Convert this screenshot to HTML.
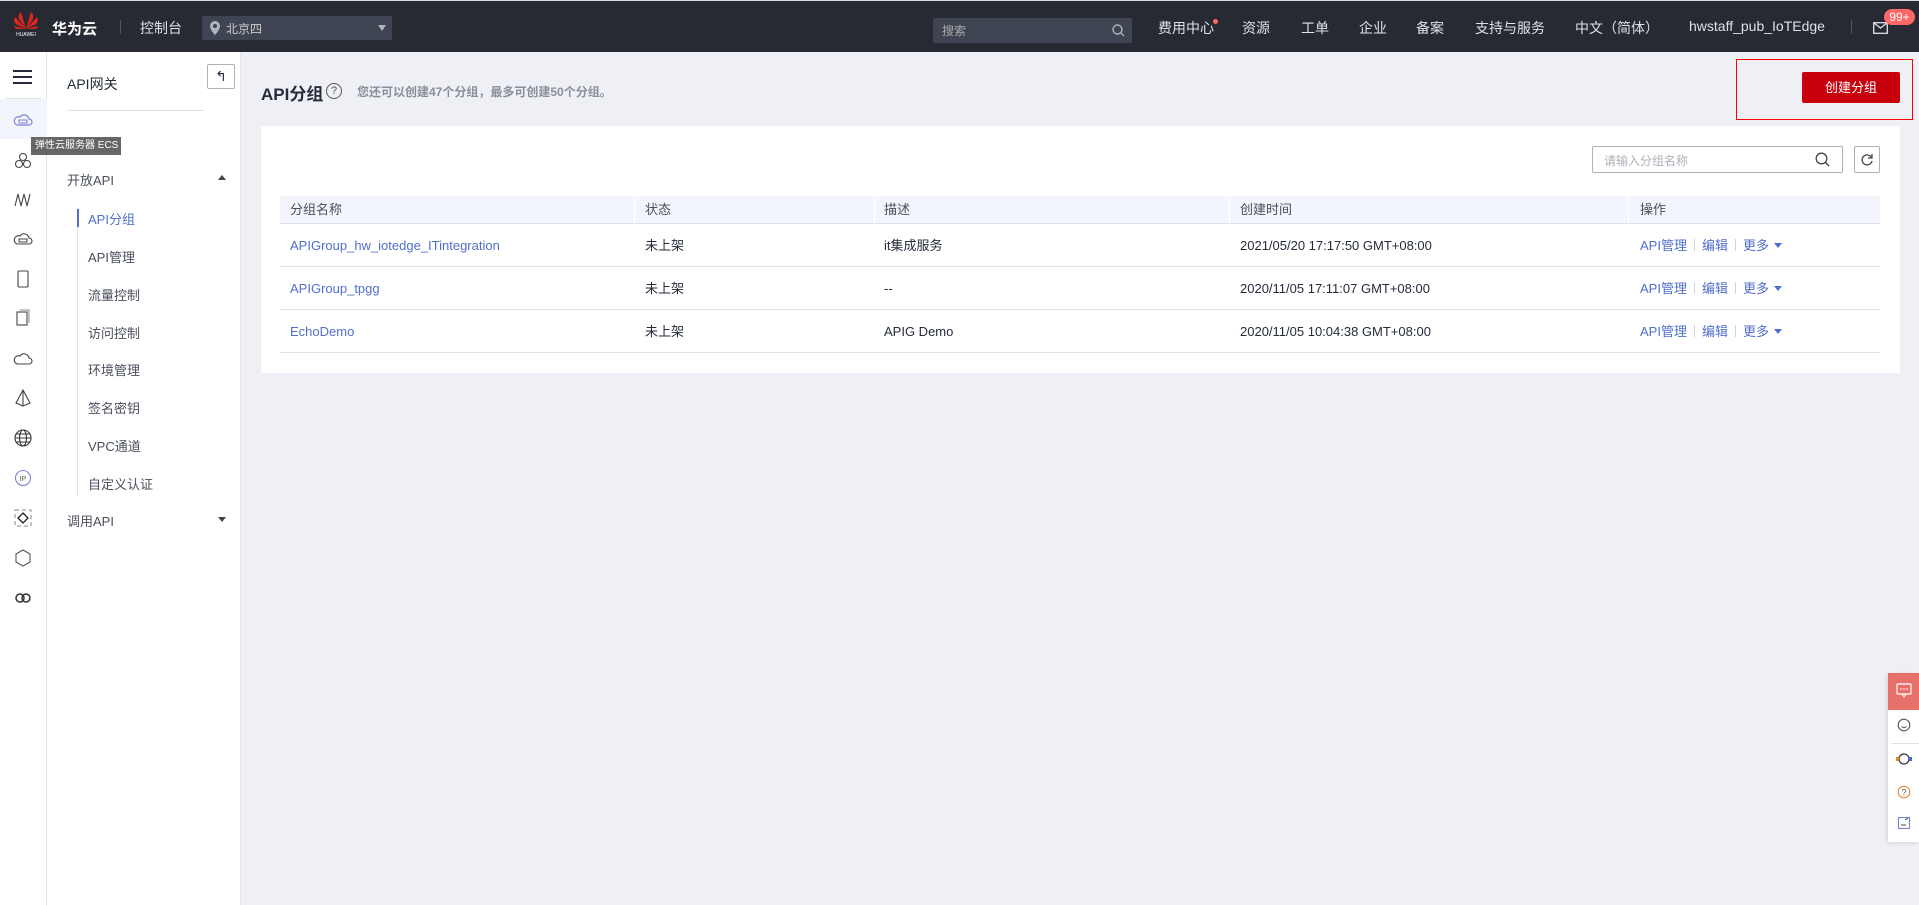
<!DOCTYPE html>
<html><head><meta charset="utf-8"><style>
*{margin:0;padding:0;box-sizing:border-box}
body{width:1919px;height:905px;overflow:hidden;background:#eef0f5;font-family:"Liberation Sans","Noto Sans CJK SC",sans-serif;font-size:13px;color:#252b3a;position:relative}
.abs{position:absolute}
#hdr{left:0;top:0;width:1919px;height:52px;background:#272a33;border-top:1px solid #d8dbe0}
#hdr .t{position:absolute;top:17px;color:#dfe1e6;font-size:14px;white-space:nowrap}
#ib{left:0;top:52px;width:47px;height:853px;background:#fff;border-right:1px solid #e3e5ea}
#sb{left:47px;top:52px;width:194px;height:853px;background:#fff;border-right:1px solid #e3e5ea}
.mi{position:absolute;left:41px;font-size:13px;color:#4a4f5c}
.ico{position:absolute;left:13px;width:20px;height:20px}
#card{left:261px;top:126px;width:1639px;height:247px;background:#fff}
.th{position:absolute;top:196px;height:28px;line-height:28px;background:#f2f5fc;font-size:13px;color:#4a4f5c;border-bottom:1px solid #dfe1e6}
.row{position:absolute;left:280px;width:1600px;height:43px;border-bottom:1px solid #dfe1e6}
.c{position:absolute;top:1px;line-height:42px;font-size:13px;white-space:nowrap}
a{color:#526ecc;text-decoration:none}
.op{color:#526ecc}
.sep{display:inline-block;width:1px;height:12px;background:#d0d3da;margin:0 7px;vertical-align:-1px}
.tri{display:inline-block;width:0;height:0;border-left:4px solid transparent;border-right:4px solid transparent;border-top:5px solid #526ecc;margin-left:5px;vertical-align:2px}
</style></head><body>
<div id="hdr" class="abs">
 <svg class="abs" style="left:12px;top:8px" width="28" height="28" viewBox="0 0 28 28">
  <g fill="#e0241b"><path d="M14 20 L9 3 Q6 5 7 10Z"/><path d="M14 20 L19 3 Q22 5 21 10Z"/><path d="M14 20 L3 8 Q1 12 4 15Z"/><path d="M14 20 L25 8 Q27 12 24 15Z"/><path d="M14 20 L2 17 Q3 20 6 20Z"/><path d="M14 20 L26 17 Q25 20 22 20Z"/></g>
  <text x="14" y="27" font-size="5" fill="#fff" text-anchor="middle" font-family="Liberation Sans">HUAWEI</text></svg>
 <div class="t" style="left:52px;font-weight:bold;color:#fff;font-size:15px">华为云</div>
 <div class="abs" style="left:120px;top:19px;width:1px;height:14px;background:#555"></div>
 <div class="t" style="left:140px">控制台</div>
 <div class="abs" style="left:202px;top:15px;width:190px;height:24px;background:#3f4452;border-radius:2px"></div>
 <svg class="abs" style="left:210px;top:20px" width="10" height="14" viewBox="0 0 10 14"><path d="M5 0a5 5 0 0 0-5 5c0 4 5 9 5 9s5-5 5-9a5 5 0 0 0-5-5z" fill="#aeb3bf"/><circle cx="5" cy="5" r="2" fill="#3f4452"/></svg>
 <div class="t" style="left:226px;top:19px;font-size:12px;color:#ccc">北京四</div>
 <div class="abs" style="left:378px;top:24px;border-left:4px solid transparent;border-right:4px solid transparent;border-top:6px solid #aeb3bf"></div>
 <div class="abs" style="left:933px;top:17px;width:199px;height:25px;background:#3f4452;border-radius:2px"></div>
 <div class="t" style="left:942px;top:21px;font-size:12px;color:#aaa">搜索</div>
 <svg class="abs" style="left:1112px;top:23px" width="13" height="13" viewBox="0 0 13 13"><circle cx="5.5" cy="5.5" r="4.5" fill="none" stroke="#aeb3bf" stroke-width="1.4"/><path d="M9 9l3 3" stroke="#aeb3bf" stroke-width="1.4"/></svg>
 <div class="t" style="left:1158px">费用中心</div><div class="abs" style="left:1213px;top:18px;width:5px;height:5px;border-radius:50%;background:#f66"></div>
 <div class="t" style="left:1242px">资源</div>
 <div class="t" style="left:1301px">工单</div>
 <div class="t" style="left:1359px">企业</div>
 <div class="t" style="left:1416px">备案</div>
 <div class="t" style="left:1475px">支持与服务</div>
 <div class="t" style="left:1575px">中文（简体）</div>
 <div class="t" style="left:1689px">hwstaff_pub_IoTEdge</div>
 <div class="abs" style="left:1851px;top:19px;width:1px;height:14px;background:#555"></div>
 <svg class="abs" style="left:1873px;top:21px" width="15" height="12" viewBox="0 0 15 12"><rect x=".7" y=".7" width="13.6" height="10.6" fill="none" stroke="#dfe1e6" stroke-width="1.3"/><path d="M1 1l6.5 5 6.5-5" fill="none" stroke="#dfe1e6" stroke-width="1.3"/></svg>
 <div class="abs" style="left:1884px;top:8px;width:31px;height:16px;border-radius:8px;background:#f66;color:#fff;font-size:12px;line-height:16px;text-align:center">99+</div>
</div>

<div id="ib" class="abs">
 <div class="abs" style="left:13px;top:18px;width:19px;height:2px;background:#252b3a;box-shadow:0 6px 0 #252b3a,0 12px 0 #252b3a"></div>
 <div class="abs" style="left:6px;top:46px;width:35px;height:1px;background:#dfe1e6"></div>
 <div class="abs" style="left:0;top:47px;width:47px;height:40px;background:#f2f5fc"></div>
 <svg class="ico" style="top:58px" viewBox="0 0 20 20"><path d="M4 15h12a3 3 0 0 0 0-6 5 5 0 0 0-9-2 4 4 0 0 0-3 8z" fill="none" stroke="#7a85d6" stroke-width="1.2"/><rect x="6" y="10" width="8" height="3" fill="none" stroke="#7a85d6"/></svg>
 <svg class="ico" style="top:99px" viewBox="0 0 20 20"><g fill="none" stroke="#444" stroke-width="1.1"><circle cx="10" cy="6" r="3.5"/><circle cx="6" cy="13" r="3.5"/><circle cx="14" cy="13" r="3.5"/></g></svg>
 <svg class="ico" style="top:138px" viewBox="0 0 20 20"><path d="M2 16 5 4 8 16 11 4 14 16 17 4" fill="none" stroke="#444" stroke-width="1.1"/></svg>
 <svg class="ico" style="top:177px" viewBox="0 0 20 20"><path d="M4 15h12a3 3 0 0 0 0-6 5 5 0 0 0-9-2 4 4 0 0 0-3 8z" fill="none" stroke="#444" stroke-width="1.1"/><rect x="6" y="10" width="8" height="3" fill="none" stroke="#444"/></svg>
 <svg class="ico" style="top:217px" viewBox="0 0 20 20"><rect x="5" y="2" width="10" height="16" rx="1" fill="none" stroke="#444" stroke-width="1.1"/></svg>
 <svg class="ico" style="top:256px" viewBox="0 0 20 20"><rect x="4" y="4" width="10" height="13" fill="none" stroke="#444" stroke-width="1.1"/><path d="M7 2h9v13" fill="none" stroke="#888"/></svg>
 <svg class="ico" style="top:297px" viewBox="0 0 20 20"><path d="M4 15h12a3 3 0 0 0 0-6 5 5 0 0 0-9-2 4 4 0 0 0-3 8z" fill="none" stroke="#444" stroke-width="1.1"/></svg>
 <svg class="ico" style="top:336px" viewBox="0 0 20 20"><path d="M10 2 3 15l7 3 7-3z M10 2v16" fill="none" stroke="#444" stroke-width="1.1"/></svg>
 <svg class="ico" style="top:376px" viewBox="0 0 20 20"><g fill="none" stroke="#333" stroke-width="1.1"><circle cx="10" cy="10" r="8"/><ellipse cx="10" cy="10" rx="3.5" ry="8"/><path d="M2 10h16M3.5 6h13M3.5 14h13"/></g></svg>
 <svg class="ico" style="top:416px" viewBox="0 0 20 20"><circle cx="10" cy="10" r="7.5" fill="none" stroke="#7a85d6" stroke-width="1.1"/><text x="10" y="13" font-size="7" text-anchor="middle" fill="#555">IP</text></svg>
 <svg class="ico" style="top:456px" viewBox="0 0 20 20"><rect x="2" y="2" width="16" height="16" fill="none" stroke="#888" stroke-dasharray="4 3"/><path d="M10 5l5 5-5 5-5-5z" fill="none" stroke="#222" stroke-width="1.3"/></svg>
 <svg class="ico" style="top:496px" viewBox="0 0 20 20"><path d="M10 2l7 4v8l-7 4-7-4V6z" fill="none" stroke="#555" stroke-width="1.1"/></svg>
 <svg class="ico" style="top:536px" viewBox="0 0 20 20"><g fill="none" stroke="#333" stroke-width="1.5"><circle cx="7" cy="10" r="4"/><circle cx="13" cy="10" r="4"/></g></svg>
</div>
<div class="abs" style="left:31px;top:137px;width:90px;height:18px;background:#666;color:#fff;font-size:10px;line-height:18px;padding-left:4px;z-index:3">弹性云服务器 ECS</div>

<div id="sb" class="abs">
 <div class="abs" style="left:20px;top:22px;font-size:14px">API网关</div>
 <div class="abs" style="left:160px;top:12px;width:28px;height:25px;border:1px solid #adb0b8;border-radius:2px;background:#fff;font-size:14px;line-height:22px;text-align:center">↰</div>
 <div class="abs" style="left:20px;top:58px;width:137px;height:1px;background:#dfe1e6"></div>
 <div class="abs" style="left:20px;top:118px;color:#4a4f5c">开放API</div>
 <div class="abs" style="left:171px;top:123px;border-left:4px solid transparent;border-right:4px solid transparent;border-bottom:5px solid #444"></div>
 <div class="abs" style="left:30px;top:155px;width:1px;height:290px;background:#dfe1e6"></div>
 <div class="abs" style="left:30px;top:157px;width:2px;height:18px;background:#526ecc"></div>
 <div class="mi" style="top:157px;color:#526ecc">API分组</div>
 <div class="mi" style="top:195px">API管理</div>
 <div class="mi" style="top:233px">流量控制</div>
 <div class="mi" style="top:271px">访问控制</div>
 <div class="mi" style="top:308px">环境管理</div>
 <div class="mi" style="top:346px">签名密钥</div>
 <div class="mi" style="top:384px">VPC通道</div>
 <div class="mi" style="top:422px">自定义认证</div>
 <div class="abs" style="left:20px;top:459px;color:#4a4f5c">调用API</div>
 <div class="abs" style="left:171px;top:465px;border-left:4px solid transparent;border-right:4px solid transparent;border-top:5px solid #444"></div>
</div>

<div class="abs" style="left:261px;top:80px;font-size:17px;font-weight:bold;color:#252b3a">API分组</div>
<div class="abs" style="left:326px;top:83px;width:16px;height:16px;border:1.3px solid #555;border-radius:50%;font-size:11px;line-height:14px;text-align:center;color:#555">?</div>
<div class="abs" style="left:357px;top:83px;font-size:12px;color:#8a8e99;font-weight:bold">您还可以创建47个分组，最多可创建50个分组。</div>
<div class="abs" style="left:1736px;top:59px;width:177px;height:61px;border:1px solid #f00"></div>
<div class="abs" style="left:1802px;top:72px;width:98px;height:31px;background:#c7000b;border-radius:2px;color:#fff;font-size:13px;line-height:31px;text-align:center">创建分组</div>

<div id="card" class="abs"></div>
<div class="abs" style="left:1592px;top:146px;width:251px;height:27px;border:1px solid #adb0b8;border-radius:2px;background:#fff"></div>
<div class="abs" style="left:1604px;top:152px;font-size:12px;color:#adb0b8">请输入分组名称</div>
<svg class="abs" style="left:1815px;top:152px" width="15" height="15" viewBox="0 0 15 15"><circle cx="6.5" cy="6.5" r="5.3" fill="none" stroke="#444" stroke-width="1.3"/><path d="M10.5 10.5l3.5 3.5" stroke="#444" stroke-width="1.3"/></svg>
<div class="abs" style="left:1854px;top:146px;width:26px;height:27px;border:1px solid #adb0b8;border-radius:2px;background:#fff"></div>
<svg class="abs" style="left:1860px;top:153px" width="14" height="14" viewBox="0 0 14 14"><path d="M11.5 4.5A5 5 0 1 0 12 8" fill="none" stroke="#444" stroke-width="1.3"/><path d="M12 1v4H8" fill="none" stroke="#444" stroke-width="1.3"/></svg>

<div class="th" style="left:280px;width:354px;padding-left:10px">分组名称</div>
<div class="th" style="left:635px;width:239px;padding-left:10px">状态</div>
<div class="th" style="left:875px;width:354px;padding-left:9px">描述</div>
<div class="th" style="left:1230px;width:398px;padding-left:10px">创建时间</div>
<div class="th" style="left:1629px;width:251px;padding-left:11px">操作</div>

<div class="row" style="top:224px">
 <div class="c" style="left:10px"><a>APIGroup_hw_iotedge_ITintegration</a></div>
 <div class="c" style="left:365px">未上架</div><div class="c" style="left:604px">it集成服务</div>
 <div class="c" style="left:960px">2021/05/20 17:17:50 GMT+08:00</div>
 <div class="c op" style="left:1360px">API管理<span class="sep"></span>编辑<span class="sep"></span>更多<span class="tri"></span></div>
</div>
<div class="row" style="top:267px">
 <div class="c" style="left:10px"><a>APIGroup_tpgg</a></div>
 <div class="c" style="left:365px">未上架</div><div class="c" style="left:604px">--</div>
 <div class="c" style="left:960px">2020/11/05 17:11:07 GMT+08:00</div>
 <div class="c op" style="left:1360px">API管理<span class="sep"></span>编辑<span class="sep"></span>更多<span class="tri"></span></div>
</div>
<div class="row" style="top:310px">
 <div class="c" style="left:10px"><a>EchoDemo</a></div>
 <div class="c" style="left:365px">未上架</div><div class="c" style="left:604px">APIG Demo</div>
 <div class="c" style="left:960px">2020/11/05 10:04:38 GMT+08:00</div>
 <div class="c op" style="left:1360px">API管理<span class="sep"></span>编辑<span class="sep"></span>更多<span class="tri"></span></div>
</div>

<div class="abs" style="left:1888px;top:673px;width:31px;height:169px;background:#fff;box-shadow:-1px 1px 4px rgba(0,0,0,.12)"></div>
<div class="abs" style="left:1888px;top:673px;width:31px;height:37px;background:#e8706a"></div>
<svg class="abs" style="left:1896px;top:682px" width="16" height="16" viewBox="0 0 16 16"><rect x="1" y="2" width="14" height="10" rx="1" fill="none" stroke="#fff" stroke-width="1.2"/><path d="M6 12l2 3 2-3" fill="none" stroke="#fff"/><circle cx="5" cy="7" r=".8" fill="#fff"/><circle cx="8" cy="7" r=".8" fill="#fff"/><circle cx="11" cy="7" r=".8" fill="#fff"/></svg>
<svg class="abs" style="left:1897px;top:718px" width="14" height="14" viewBox="0 0 14 14"><circle cx="7" cy="7" r="5.8" fill="none" stroke="#555" stroke-width="1.1"/><path d="M4.5 8.5q2.5 2 5 0" fill="none" stroke="#555"/></svg>
<div class="abs" style="left:1891px;top:743px;width:28px;height:1px;background:#dfe1e6"></div>
<svg class="abs" style="left:1895px;top:752px" width="18" height="14" viewBox="0 0 18 14"><circle cx="9" cy="7" r="5" fill="none" stroke="#333" stroke-width="1.2"/><rect x="1" y="5" width="3" height="4" fill="#e58a1f"/><rect x="14" y="5" width="3" height="4" fill="#3b6fd6"/></svg>
<svg class="abs" style="left:1897px;top:785px" width="14" height="14" viewBox="0 0 14 14"><circle cx="7" cy="7" r="5.8" fill="none" stroke="#e58a1f" stroke-width="1.1"/><text x="7" y="10.5" font-size="9" text-anchor="middle" fill="#555">?</text></svg>
<svg class="abs" style="left:1897px;top:816px" width="14" height="14" viewBox="0 0 14 14"><rect x="1.5" y="1.5" width="11" height="11" fill="none" stroke="#7a85d6" stroke-width="1.1"/><path d="M4 9h5M8 4l3-2" stroke="#444"/></svg>
</body></html>
